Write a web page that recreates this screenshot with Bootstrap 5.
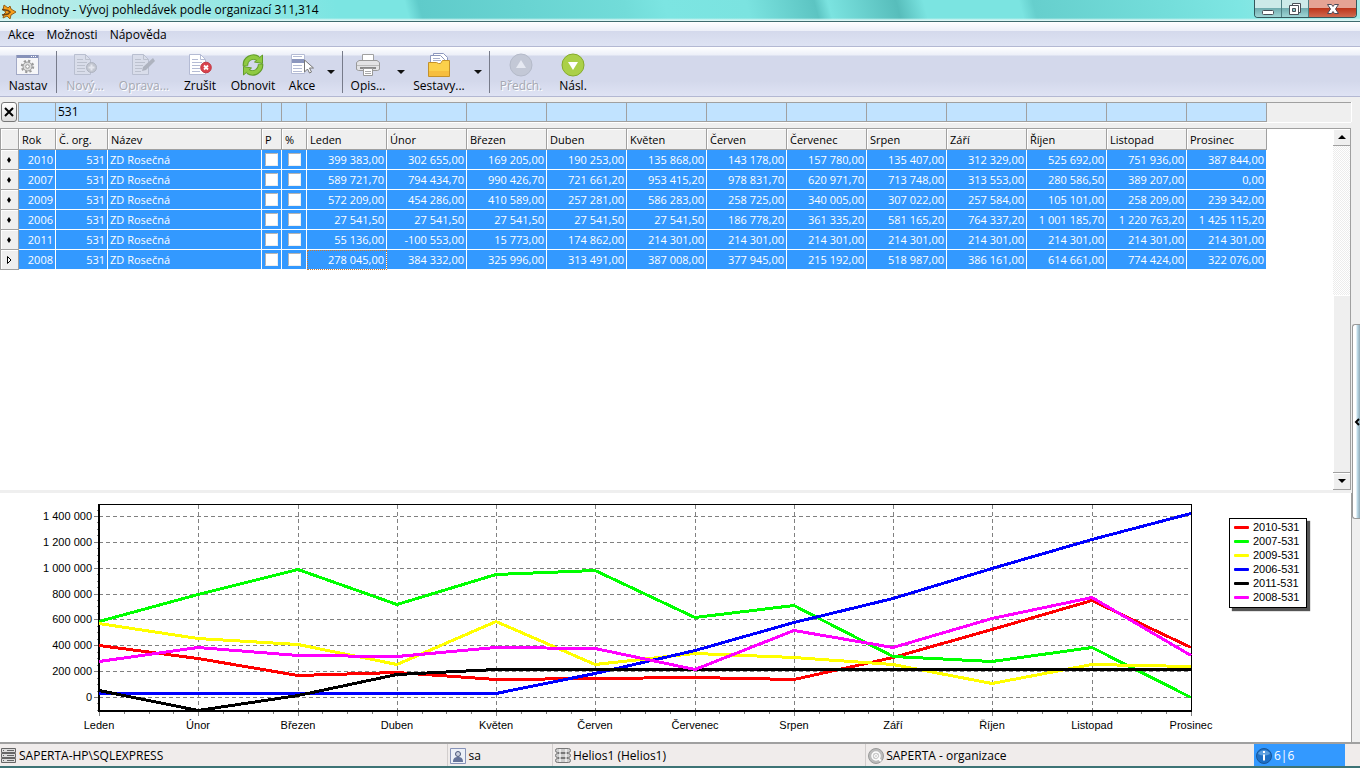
<!DOCTYPE html>
<html lang="cs">
<head>
<meta charset="utf-8">
<meta name="viewport" content="width=device-width, initial-scale=1">
<title>Hodnoty - Vývoj pohledávek podle organizací 311,314</title>
<link href="https://cdn.jsdelivr.net/npm/bootstrap@5.3.0/dist/css/bootstrap.min.css" rel="stylesheet">
<style>
  body { font: 12px/16px "Open Sans", "Noto Sans", sans-serif; color: #000; background: #efefef; }
  .app { min-height: 100vh; }
  button { font: inherit; }

  .titlebar { height: 22px; padding-left: 1px; border-bottom: 1px solid #3f6b6e;
    background: linear-gradient(180deg, #0000 18px, #d9f5f3 20px),
      linear-gradient(75deg, #bdeeeb 0, #a5e9e6 12%, #7be5e2 25%, #7be5e2 30%, #5fcbca 31%, #72dcd9 46%, #7ce5e2 49%, #7be3e0 55%, #5cc4c2 60%, #7be3e0 61%, #57bdbb 66%, #7be4e1 68%, #7be4e1 75%, #66cfcd 76%, #74dedb 86%, #7ee6e3 91%, #a8ece9 100%); }
  .win-btns { margin-right: 3px; border: 1px solid #33575b; border-top: 0; border-radius: 0 0 4px 4px; overflow: hidden; height: 18px; }
  .win-btns button { width: 27px; border: 0; border-right: 1px solid #4e7f83; padding: 0; line-height: 0; background: linear-gradient(#cdeae9 0 50%, #72adb0 50%, #9fd5d5); }
  .win-btns .win-close { width: 47px; border-right: 0; background: linear-gradient(#e5a394 0 48%, #bd371c 50%, #cf6a50); }

  .menubar { height: 25px; border-bottom: 1px solid #b3b8d2; padding: 2px 0 0 2px; background: linear-gradient(#fff, #eceff8 9px, #d4d9ec 9px, #dee3f3); }
  .menubar a { color: #000; padding: 0 6px; text-decoration: none; }
  .toolbar { height: 50px; border-bottom: 1px solid #b3b8d2; background: linear-gradient(#fff, #eceff8 8px, #d3d8eb 9px, #d3d8eb 34px, #dfe3f4); }
  .tool { border: 0; background: none; padding: 3px 0 0; height: 47px; white-space: nowrap; width: 56px; }
  .tool.narrow { width: 42px; } .tool.mid { width: 50px; } .tool.wide { width: 62px; }
  .tool svg { display: block; margin: 0 auto 1px; }
  .tool:disabled { color: #a5a8b2; text-shadow: 1px 1px #fff; }
  .drop { border: 0; background: none; padding: 0; width: 15px; height: 47px; }
  .drop::before { content: ""; display: block; margin: 0 auto; width: 8px; border: 4px solid transparent; border-top-color: #111; border-bottom: 0; }
  .sep { width: 1px; height: 42px; background: #777b8a; }

  .filter { margin: 5px 0 6px; height: 20px; }
  .filter-x { width: 16px; margin: 0 1px; padding: 0; border: 1px solid #777; border-radius: 3px; background: linear-gradient(#fff, #ddd); line-height: 0; }
  .filter-cells { border: 1px solid #a0a0a0; border-width: 1px 0 0 1px; box-shadow: 0 1px #fff, 1px 0 #fff; margin-right: 1px; }
  .filter-cells input { border: 1px solid #a0a0a0; border-width: 0 1px 1px 0; background: #c1e3ff; padding: 0 2px; outline: 0; min-width: 0; border-radius: 0; }
  .c-head { width: 19px; } .c-year { width: 37px; } .c-org { width: 52px; } .c-name { width: 154px; }
  .c-p { width: 20px; } .c-pct { width: 25px; } .c-month { width: 80px; }

  .work { min-width: 0; }
  .gridbox { background: #fff; border: 1px solid #a0a0a0; border-width: 1px 1px 0 0; min-height: 361px; margin-right: 1px; }
  .grid { table-layout: fixed; width: 1267px; border-collapse: separate; border-spacing: 0; font-size: 11px; line-height: 18px; }
  .grid th { font-weight: 400; background: #efefef; height: 21px; padding: 2px 0 0 3px; border-bottom: 1px solid #a0a0a0; border-right: 1px solid #a0a0a0; white-space: nowrap; line-height: 16px; box-shadow: inset 0 1px #fff, inset 1px 0 #fff; }
  .grid td { height: 20px; padding: 0 2px 0 1px; background: #39f; color: #fff; border-bottom: 1px solid #fff; border-right: 1px solid #fff; text-align: right; white-space: nowrap; line-height: 17px; }
  .grid td.txt { text-align: left; padding-left: 2px; }
  .grid td.tick { padding: 0; line-height: 0; }
  .grid tbody th { height: 20px; padding: 0; text-align: center; line-height: 0; }
  .grid th:first-child { box-shadow: inset 1px 0 #a0a0a0, inset 2px 1px #fff; }
  .grid input { appearance: none; display: block; width: 13px; height: 13px; margin: 0 auto; background: #fff; border: 1px solid #b4b4b4; border-right-color: #eee; border-bottom-color: #eee; }
  .grid .current { outline: 1px dotted #c87832; outline-offset: -1px; }

  .scroller { width: 17px; background: repeating-conic-gradient(#fff 0 25%, #ececec 0 50%) 0 0 / 2px 2px; }
  .scroller button, .thumb { background: #efefef; border: 1px solid #a0a0a0; border-width: 0 0 1px; box-shadow: inset 1px 1px #fff; padding: 0; line-height: 0; }
  .scroller button { height: 17px; }
  .track { flex: 149 1 0; } .thumb { flex: 178 1 0; }

  .side { width: 8px; padding-top: 227px; }
  .side button { height: 195px; width: 8px; border: 1px solid #999; border-right: 0; border-radius: 3px 0 0 3px; padding: 0; line-height: 0; background: linear-gradient(90deg, #fff 3px, #c3e0ee 4px, #8fa9b6 7px); }

  .chartbox { margin-top: 3px; background: #fff; border-right: 1px solid #a0a0a0; height: 249px; font-family: "Liberation Sans", Arial, sans-serif; font-size: 11px; }
  .legend { margin: 25px 44px 0 13px; width: 78px; padding: 1px 4px 3px; border: 1px solid #000; background: #fff; box-shadow: 3px 3px 1px #555; line-height: 14px; }
  .legend i { width: 15px; height: 3px; margin-right: 4px; border-radius: 1px; }

  .status { height: 26px; background: #f0eceb; border-top: 2px solid #a0a0a0; border-bottom: 2px solid #3d7375; }
  .status > div { padding: 2px 0 0 2px; border-left: 1px solid #d2cecd; overflow: hidden; }
  .status svg { margin-right: 2px; flex: none; }
  .s1 { flex: 450 1 0; } .s2 { flex: 102 1 0; } .s3 { flex: 312 1 0; } .s4 { flex: 388 1 0; }
  .status .s5 { width: 91px; background: #39f; color: #fff; margin-right: 15px; }
</style>
</head>
<body>
<div class="app d-flex flex-column">

  <header class="titlebar d-flex align-items-start">
    <svg class="mt-1" width="16" height="16" viewBox="0 0 16 16"><path d="M3 1l4 3 2-2 1 3 5 3-5 3-1 4-3-3-4 2 1-4 2-2-3-2z" fill="#f9a01b" stroke="#94601a"/><path d="M1 5.500l6 1 2 1.500-2 2-6 1" fill="none" stroke="#6b4416" stroke-width="1.500"/></svg>
    <div class="ms-1 pt-1 flex-grow-1 lh-1">Hodnoty - Vývoj pohledávek podle organizací 311,314</div>
    <div class="win-btns d-flex">
      <button type="button" aria-label="Minimalizovat"><svg width="14" height="14"><rect x="1.500" y="8.500" width="11" height="4" rx="1" fill="#fff" stroke="#4a5058"/></svg></button>
      <button type="button" aria-label="Obnovit okno"><svg width="14" height="14"><path d="M4.500 1.500h8v9h-8z" fill="#fff" stroke="#4a5058"/><path d="M1.500 3.500h9v9h-9z" fill="#fff" stroke="#4a5058"/><path d="M4.500 6.500h3v3h-3z" fill="#8cc" stroke="#4a5058"/></svg></button>
      <button type="button" class="win-close" aria-label="Zavřít"><svg width="14" height="14" viewBox="0 0 14 14"><path d="M1.500 2.500h4l1.500 2 1.500-2h4l-3 4.500 3 4.500h-4l-1.500-2-1.500 2h-4l3-4.500z" fill="#fff" stroke="#4a4a58"/></svg></button>
    </div>
  </header>

  <nav class="menubar d-flex align-items-center">
    <a href="#">Akce</a><a href="#">Možnosti</a><a href="#">Nápověda</a>
  </nav>

  <div class="toolbar d-flex align-items-center">
    <button type="button" class="tool"><svg width="24" height="24" viewBox="0 0 24 24"><rect x=".5" y="2.500" width="22" height="19" fill="#f6f6f8" stroke="#a3aac6"/><path d="M1 2h21v3H1z" fill="#8792ba"/><path d="M15 3.500h1m1 0h1m1 0h1" stroke="#fff"/><circle cx="11.500" cy="13.500" r="4.500" fill="#ddd" stroke="#999"/><circle cx="11.500" cy="13.500" r="5.700" fill="none" stroke="#999" stroke-width="2" stroke-dasharray="2.200 2.270"/><circle cx="11.500" cy="13.500" r="1.800" fill="#fff" stroke="#999"/></svg>Nastav</button>
    <span class="sep"></span>
    <button type="button" class="tool" disabled><svg width="24" height="24" viewBox="0 0 24 24"><path d="M1.500 1.500h11l5 5v15h-16z" fill="#d9ddea" stroke="#b9bfd0"/><path d="M12.500 1.500v5h5M4 6.500h6M4 9.500h10M4 12.500h8M4 15.500h8M4 18.500h8" fill="none" stroke="#bcc1ce"/><circle cx="18.500" cy="14.500" r="5" fill="#c2c6d0" stroke="#aeb3c0"/><path d="M18.500 11.500v6m-3-3h6" stroke="#e4e6ee" stroke-width="2"/></svg>Nový...</button>
    <button type="button" class="tool wide" disabled><svg width="24" height="24" viewBox="0 0 24 24"><path d="M.5 1.500h11l5 5v15H.5z" fill="#d9ddea" stroke="#b9bfd0"/><path d="M11.500 1.500v5h5M3 6.500h6M3 9.500h10M3 12.500h8M3 15.500h7M3 18.500h6" fill="none" stroke="#bcc1ce"/><path d="M10 18l1-4L21 5l2 3-9 9z" fill="#aeb3bf"/></svg>Oprava...</button>
    <button type="button" class="tool mid"><svg width="24" height="24" viewBox="0 0 24 24"><path d="M1.500 1.500h11l5 5v15h-16z" fill="#fff" stroke="#b4bbd4"/><path d="M12.500 1.500v5h5M4 6.500h6M4 9.500h10M4 12.500h8M4 15.500h8M4 18.500h8" fill="none" stroke="#b4bbd4"/><circle cx="18" cy="14.500" r="5.300" fill="#d9434d" stroke="#c23a46"/><path d="M16 12.500l4 4m0-4l-4 4" stroke="#fff" stroke-width="1.800"/></svg>Zrušit</button>
    <button type="button" class="tool"><svg width="24" height="24" viewBox="0 0 24 24"><path d="M4.500 13A8 8 0 0 1 17 5.500M19.500 11A8 8 0 0 1 7 18.500" fill="none" stroke="#629c2a" stroke-width="5.500"/><path d="M21.500 2v8.500l-8-1.500zM2.500 22v-8.500l8 1.500z" fill="#8fca42" stroke="#629c2a"/><path d="M4.500 12.500A8 8 0 0 1 17.500 6M19.500 11.500A8 8 0 0 1 6.500 18" fill="none" stroke="#8fca42" stroke-width="3.500"/></svg>Obnovit</button>
    <button type="button" class="tool narrow"><svg width="24" height="24" viewBox="0 0 24 24"><path d="M1.500 1.500h13v19h-13z" fill="#fff" stroke="#b4bbd4"/><path d="M2 6h12v4H2z" fill="#8b96bd"/><path d="M3 3.500h9M3 12.500h9M3 15.500h9M3 18.500h9" stroke="#b4bbd4"/><path d="M14.500 7v12l3-3 2 4 2-1-2-4h4z" fill="#fff" stroke="#777"/></svg>Akce</button>
    <button type="button" class="drop" aria-label="Další akce"></button>
    <span class="sep ms-1"></span>
    <button type="button" class="tool mid"><svg width="24" height="24" viewBox="0 0 24 24"><path d="M6.500 1.500h11v7h-11z" fill="#fff" stroke="#a0a0a0"/><path d="M3 7.500h18l2.500 2v7l-2 1h-19l-2-1v-7z" fill="#e3e3e5" stroke="#999"/><path d="M1 12.500h22" stroke="#bbb"/><path d="M4 14h16v2H4z" fill="#888"/><path d="M7.500 15.500h9v7h-9z" fill="#fff" stroke="#999"/><path d="M9 18.500h6m-6 2h6" stroke="#aaa"/></svg>Opis...</button>
    <button type="button" class="drop" aria-label="Možnosti opisu"></button>
    <button type="button" class="tool wide"><svg width="24" height="24" viewBox="0 0 24 24"><path d="M6.500.5h10l4 4v10h-14z" fill="#fff" stroke="#8c97bd"/><path d="M3.500 2.500h10l4 4v9h-14z" fill="#fff" stroke="#8c97bd"/><path d="M6 5.500h7M6 7.500h8" stroke="#a8b0cc"/><path d="M1.500 9.500h8l2 1h2l2-3h7v16h-21z" fill="#fbd04b" stroke="#c4912a"/><path d="M2 18h20v5H2z" fill="#f6be3e"/></svg>Sestavy...</button>
    <button type="button" class="drop" aria-label="Další sestavy"></button>
    <span class="sep ms-1"></span>
    <button type="button" class="tool wide" disabled><svg width="24" height="24" viewBox="0 0 24 24"><circle cx="12" cy="12" r="11" fill="#c3c8d6" stroke="#b4bac9"/><path d="M12 7l5 8H7z" fill="#e6e9f2"/></svg>Předch.</button>
    <button type="button" class="tool narrow"><svg width="24" height="24" viewBox="0 0 24 24"><circle cx="12" cy="12" r="11" fill="#abd048" stroke="#86ab2c"/><path d="M12 17l5-8H7z" fill="#fff"/></svg>Násl.</button>
  </div>

  <div class="d-flex flex-grow-1">
    <main class="work flex-grow-1 d-flex flex-column">
      <div class="filter d-flex">
        <button type="button" class="filter-x" aria-label="Zrušit filtr"><svg width="12" height="12"><path d="M2 2l8 8m0-8l-8 8" stroke="#000" stroke-width="2"/></svg></button>
        <div class="filter-cells d-flex flex-grow-1" id="filter"></div>
      </div>

      <div class="gridbox d-flex flex-grow-1">
        <div class="flex-grow-1 overflow-hidden">
          <table class="grid">
            <colgroup id="cols"></colgroup>
            <thead><tr id="head"></tr></thead>
            <tbody id="rows"></tbody>
          </table>
        </div>
        <div class="scroller d-flex flex-column">
          <button type="button" aria-label="Nahoru"><svg width="8" height="4"><path d="M4 0l4 4H0z"/></svg></button>
          <div class="track"></div>
          <div class="thumb"></div>
          <button type="button" aria-label="Dolů"><svg width="8" height="4"><path d="M0 0h8L4 4z"/></svg></button>
        </div>
      </div>

      <section class="chartbox d-flex align-items-start">
        <svg id="chart" class="flex-grow-1" width="100" height="248" role="img" aria-label="Vývoj pohledávek"></svg>
        <div class="legend flex-shrink-0" id="legend"></div>
      </section>
    </main>
    <aside class="side flex-shrink-0">
      <button type="button" aria-label="Zobrazit panel"><svg width="6" height="8"><path d="M5 1L2 4l3 3" fill="none" stroke="#000" stroke-width="2"/></svg></button>
    </aside>
  </div>

  <footer class="status d-flex">
    <div class="s1 d-flex align-items-center border-0 ps-0"><svg width="17" height="16"><g fill="#ddd" stroke="#666"><path d="M1.500.5h14v4h-14zM1.500 5.500h14v4h-14zM1.500 10.500h14v4h-14z"/><path d="M3.500 2v1m0 4v1m0 4v1M7 2.500h7m-7 5h7m-7 5h7"/></g></svg>SAPERTA-HP\SQLEXPRESS</div>
    <div class="s2 d-flex align-items-center"><svg width="16" height="16"><path d="M.5.500h15v15H.5z" fill="#edf0f8" stroke="#8793b8"/><path d="M3 14c0-4 2-5 5-5s5 1 5 5z" fill="#65739a"/><circle cx="8" cy="6" r="2.500" fill="#c9cfdf" stroke="#4b577a"/></svg>sa</div>
    <div class="s3 d-flex align-items-center"><svg width="16" height="16"><g fill="#ccc" stroke="#777"><rect x=".5" y=".5" width="15" height="4" rx="2"/><rect x=".5" y="5.500" width="15" height="4" rx="2"/><rect x=".5" y="10.500" width="15" height="4" rx="2"/></g><path d="M5 1v13M11 1v13" stroke="#fff" stroke-width="2" opacity=".6"/></svg>Helios1 (Helios1)</div>
    <div class="s4 d-flex align-items-center"><svg width="16" height="16"><circle cx="8" cy="8" r="7.500" fill="#bbb" stroke="#999"/><circle cx="8" cy="8" r="4" fill="#ccc" stroke="#fff" stroke-width="1.500"/><circle cx="8" cy="8" r="1.500" fill="none" stroke="#fff"/><path d="M10 10l3 3" stroke="#fff" stroke-width="2"/></svg>SAPERTA - organizace</div>
    <div class="s5 d-flex align-items-center border-0"><svg width="16" height="16"><circle cx="8" cy="8" r="7.500" fill="#1e6fc4" stroke="#1a5596"/><path d="M2 6a6.500 6 0 0 1 12 0q-6 3-12 0z" fill="#5b9fe0"/><path d="M7 3h2v2H7zM7 6.500h2v6H7z" fill="#fff"/></svg>6|6</div>
  </footer>
</div>

<script src="https://cdn.jsdelivr.net/npm/bootstrap@5.3.0/dist/js/bootstrap.bundle.min.js"></script>
<script>
const months = ['Leden','Únor','Březen','Duben','Květen','Červen','Červenec','Srpen','Září','Říjen','Listopad','Prosinec'];
const data = [
  [2010, '#ff0000', [399383,302655,169205,190253,135868,143178,157780,135407,312329,525692,751936,387844]],
  [2007, '#00ff00', [589721.7,794434.7,990426.7,721661.2,953415.2,978831.7,620971.7,713748,313553,280586.5,389207,0]],
  [2009, '#ffff00', [572209,454286,410589,257281,586283,258725,340005,307022,257584,105101,258209,239342]],
  [2006, '#0000ff', [27541.5,27541.5,27541.5,27541.5,27541.5,186778.2,361335.2,581165.2,764337.2,1001185.7,1220763.2,1425115.2]],
  [2011, '#000000', [55136,-100553,15773,174862,214301,214301,214301,214301,214301,214301,214301,214301]],
  [2008, '#ff00ff', [278045,384332,325996,313491,387008,377945,215192,518987,386161,614661,774424,322076]]
];
const $ = id => document.getElementById(id);
const group = s => s.replace(/\B(?=(\d{3})+(?!\d))/g, ' ');
const money = v => { const [a, b] = v.toFixed(2).split('.'); return group(a) + ',' + b; };

// Filter row, header and records share one column list
const columns = [['head',''],['year','Rok'],['org','Č. org.'],['name','Název'],['p','P'],['pct','%'], ...months.map(m => ['month', m])];
$('cols').innerHTML = columns.map(c => `<col class="c-${c[0]}">`).join('');
$('head').innerHTML = columns.map(c => `<th scope="col">${c[1]}</th>`).join('');
$('filter').innerHTML = columns.slice(1).map(c => `<input type="text" class="c-${c[0]}" aria-label="Filtr ${c[1]}" value="${c[0] === 'org' ? '531' : ''}">`).join('');
$('rows').innerHTML = data.map(([year, , values], r) => {
  const last = r === data.length - 1;
  const mark = last ? '<path d="M2.500 1.500v7l3.500-3.500z" fill="#fff" stroke="#000"/>' : '<path d="M4 2l2 3-2 3-2-3z"/>';
  return `<tr><th scope="row" aria-label="Záznam ${r + 1}"><svg width="8" height="10">${mark}</svg></th>
    <td>${year}</td><td>531</td><td class="txt">ZD Rosečná</td>
    <td class="tick"><input type="checkbox" aria-label="P ${year}"></td><td class="tick"><input type="checkbox" aria-label="% ${year}"></td>
    ${values.map((v, i) => `<td${last && i === 0 ? ' class="current"' : ''}>${money(v)}</td>`).join('')}</tr>`;
}).join('');
$('legend').innerHTML = data.map(d => `<div class="d-flex align-items-center"><i style="background:${d[1]}"></i>${d[0]}-531</div>`).join('');

function drawChart() {
  const W = $('chart').getBoundingClientRect().width, L = 99, R = W - 25, T = 12, B = 218;
  const x = i => Math.round(L + (R - L) * i / 11), y = v => Math.round(204 - v * 25.86 / 200000);
  let s = '';
  for (let v = 0; v <= 1400000; v += 200000) {
    s += `<path d="M${L} ${y(v)}.5H${R}" stroke="#808080" stroke-dasharray="4 3"/><path d="M${L - 5} ${y(v)}.5h5" stroke="#808080"/>
      <text x="${L - 7}" y="${y(v) + 4}" text-anchor="end">${group(String(v))}</text>`;
  }
  for (let v = -100000; v <= 1450000; v += 50000) s += `<path d="M${L - 2} ${y(v)}.5h2" stroke="#808080"/>`;
  months.forEach((m, i) => {
    if (i && i < 11) s += `<path d="M${x(i)}.5 ${T}V${B}" stroke="#808080" stroke-dasharray="4 3"/>`;
    s += `<path d="M${x(i)}.5 ${B}v5" stroke="#808080"/><text x="${x(i)}" y="236" text-anchor="middle">${m}</text>`;
    if (i < 11) for (let q = 1; q < 4; q++) s += `<path d="M${x(i + q / 4)}.5 ${B}v3" stroke="#808080"/>`;
  });
  s += `<path d="M${L} ${T - .5}H${R + .5}V${B}" fill="none" stroke="#000"/><path d="M${L} ${T - 1}V${B}H${R + 1}" fill="none" stroke="#000" stroke-width="2"/>`;
  data.forEach(d => { s += `<polyline points="${d[2].map((v, i) => x(i) + ',' + (y(v) + .5)).join(' ')}" fill="none" stroke="${d[1]}" stroke-width="3"/>`; });
  $('chart').innerHTML = `<g shape-rendering="crispEdges">${s}</g>`;
}
drawChart();
addEventListener('resize', drawChart);
</script>
</body>
</html>
